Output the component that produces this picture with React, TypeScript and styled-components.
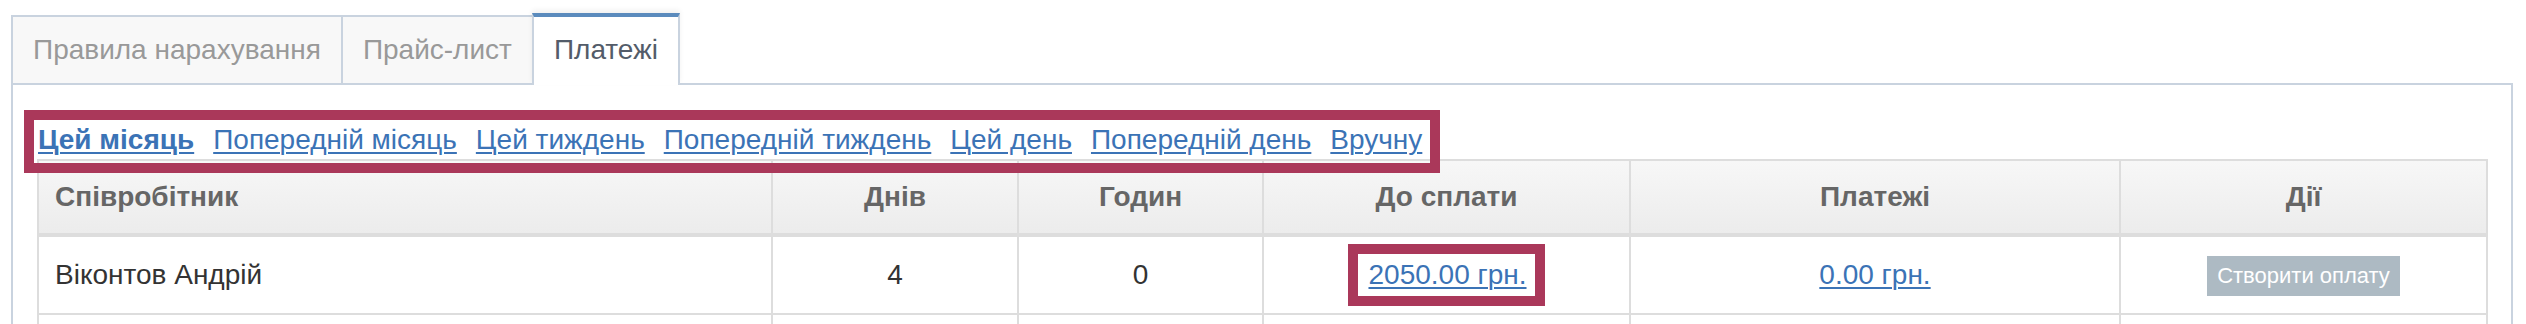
import React from "react";
import styled, { createGlobalStyle } from "styled-components";

const Global = createGlobalStyle`
  html, body { margin: 0; padding: 0; background: #fff; }
  body {
    font-family: "Liberation Sans", Arial, Helvetica, sans-serif;
    font-size: 28px;
    color: #333;
    overflow: hidden;
  }
`;

const Page = styled.div`
  padding: 13px 13px 0 11px;
`;

const TabBar = styled.div`
  display: flex;
  align-items: flex-end;
`;

const Tab = styled.div<{ $active?: boolean }>`
  position: relative;
  margin-left: -2px;
  &:first-child { margin-left: 0; }
  padding: 0 20px ${(p) => (p.$active ? "2px" : "0")};
  line-height: 66px;
  white-space: nowrap;
  border: 2px solid #c9d3df;
  border-bottom: none;
  border-top: ${(p) => (p.$active ? "4px solid #5b8bbd" : "2px solid #c9d3df")};
  background: ${(p) => (p.$active ? "#fff" : "#f8f8f8")};
  color: ${(p) => (p.$active ? "#535c69" : "#999")};
  margin-bottom: ${(p) => (p.$active ? "-2px" : "0")};
  z-index: ${(p) => (p.$active ? 1 : 0)};
  box-shadow: ${(p) => (p.$active ? "0 -3px 5px rgba(0,0,0,0.06)" : "none")};
  cursor: pointer;
`;

const Panel = styled.div`
  border: 2px solid #c9d3df;
  padding: 25px 25px 40px 24px;
`;

const PeriodBar = styled.div`
  position: relative;
  z-index: 1;
  display: inline-flex;
  gap: 19px;
  margin-left: -13px;
  margin-bottom: -14px;
  border: 10px solid #aa385a;
  padding: 0 8px 3px 4px;
  line-height: 40px;
`;

const Link = styled.a<{ $bold?: boolean }>`
  color: #3b73b6;
  text-decoration: underline;
  text-decoration-thickness: 2px;
  text-underline-offset: 3px;
  font-weight: ${(p) => (p.$bold ? 700 : 400)};
  white-space: nowrap;
  cursor: pointer;
`;

const Table = styled.table`
  width: 100%;
  table-layout: fixed;
  border-collapse: collapse;
  border: 2px solid #ddd;
`;

const Th = styled.th<{ $left?: boolean }>`
  border: 2px solid #ddd;
  border-bottom-width: 4px;
  background: linear-gradient(to bottom, #f7f7f7, #ececec);
  color: #666;
  font-weight: 700;
  text-align: ${(p) => (p.$left ? "left" : "center")};
  padding: 16px;
  line-height: 40px;
`;

const Td = styled.td<{ $left?: boolean }>`
  border: 2px solid #ddd;
  text-align: ${(p) => (p.$left ? "left" : "center")};
  padding: 17px 16px;
  line-height: 40px;
  height: 40px;
  vertical-align: middle;
`;

const Marked = styled.span`
  display: inline-block;
  border: 10px solid #aa385a;
  padding: 0 8px 0 10px;
  line-height: 42px;
  margin: -10px 0;
`;

const Button = styled.button`
  border: none;
  border-radius: 0;
  background: #adbac3;
  color: #fff;
  font-family: "Liberation Sans", Arial, Helvetica, sans-serif;
  font-size: 22px;
  height: 40px;
  line-height: 40px;
  padding: 0 10px;
  cursor: pointer;
`;

const tabs = ["Правила нарахування", "Прайс-лист", "Платежі"];
const periods = [
  "Цей місяць",
  "Попередній місяць",
  "Цей тиждень",
  "Попередній тиждень",
  "Цей день",
  "Попередній день",
  "Вручну",
];
const cols = [734, 246, 245, 367, 490, 367];

export default function App() {
  return (
    <>
      <Global />
      <Page>
        <TabBar>
          {tabs.map((t, i) => (
            <Tab key={t} $active={i === 2}>
              {t}
            </Tab>
          ))}
        </TabBar>
        <Panel>
          <PeriodBar>
            {periods.map((p, i) => (
              <Link key={p} $bold={i === 0}>
                {p}
              </Link>
            ))}
          </PeriodBar>
          <Table>
            <colgroup>
              {cols.map((w, i) => (
                <col key={i} style={{ width: w }} />
              ))}
            </colgroup>
            <thead>
              <tr>
                <Th $left>Співробітник</Th>
                <Th>Днів</Th>
                <Th>Годин</Th>
                <Th>До сплати</Th>
                <Th>Платежі</Th>
                <Th>Дії</Th>
              </tr>
            </thead>
            <tbody>
              <tr>
                <Td $left>Віконтов Андрій</Td>
                <Td>4</Td>
                <Td>0</Td>
                <Td>
                  <Marked>
                    <Link>2050.00 грн.</Link>
                  </Marked>
                </Td>
                <Td>
                  <Link>0.00 грн.</Link>
                </Td>
                <Td>
                  <Button>Створити оплату</Button>
                </Td>
              </tr>
              <tr>
                <Td $left />
                <Td />
                <Td />
                <Td />
                <Td />
                <Td />
              </tr>
            </tbody>
          </Table>
        </Panel>
      </Page>
    </>
  );
}
